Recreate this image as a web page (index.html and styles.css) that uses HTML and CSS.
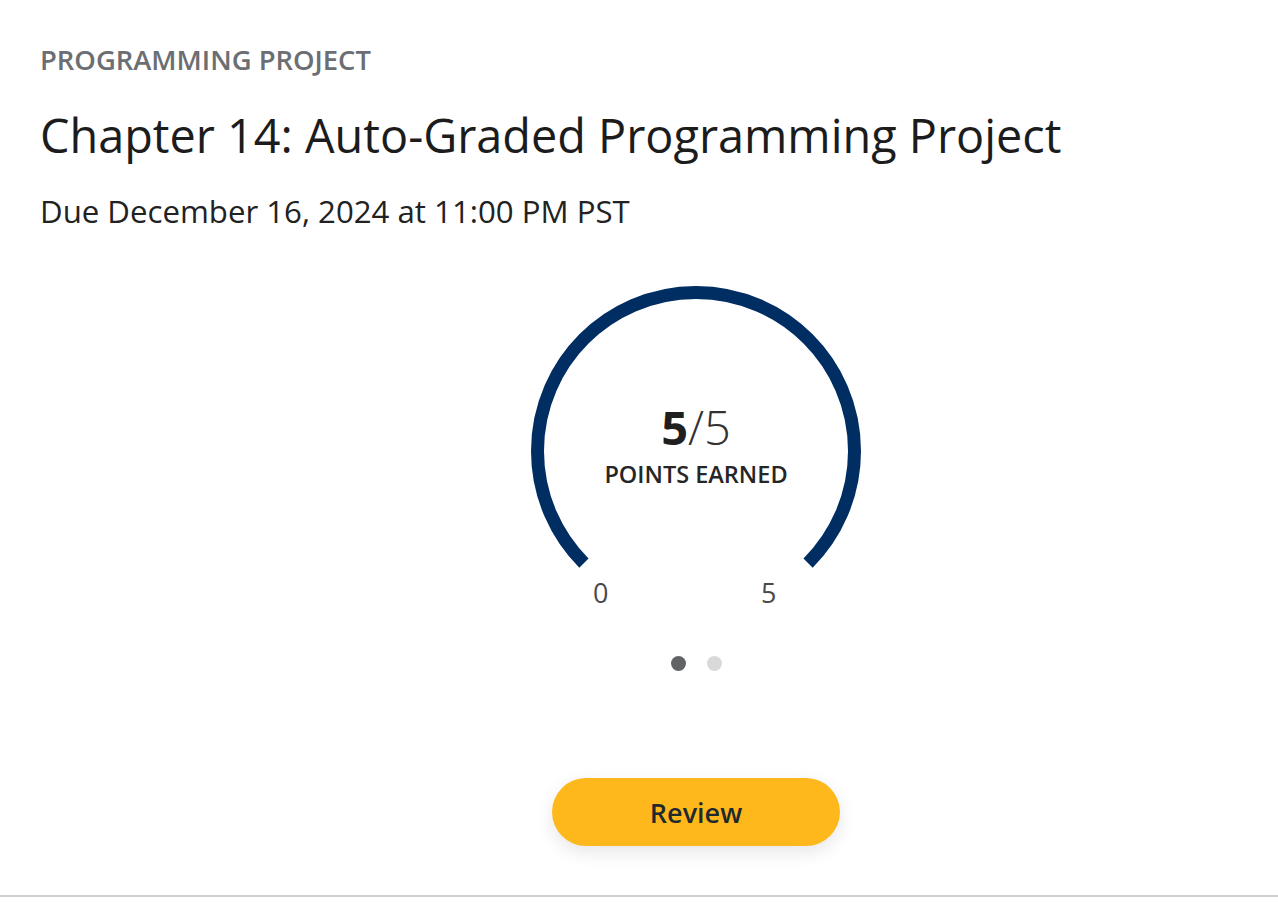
FILE: index.html
```html
<!DOCTYPE html>
<html lang="en">
<head>
<meta charset="utf-8">
<title>Chapter 14: Auto-Graded Programming Project</title>
<link rel="stylesheet" href="styles.css">
</head>
<body>
<div class="page">
  <section class="card">
    <header class="head">
      <div class="eyebrow">PROGRAMMING PROJECT</div>
      <h1 class="title">Chapter 14: Auto-Graded Programming Project</h1>
      <div class="due">Due December 16, 2024 at 11:00 PM PST</div>
    </header>
    <div class="score">
      <div class="gauge">
        <svg class="gauge-svg" width="340" height="340" viewBox="0 0 340 340">
          <path d="M 57.92 282.08 A 158.5 158.5 0 1 1 282.08 282.08" fill="none" stroke="#002d62" stroke-width="13"/>
        </svg>
        <div class="gauge-center">
          <div class="fraction"><b>5</b>/5</div>
          <div class="earned">POINTS EARNED</div>
        </div>
        <span class="tick tick-min">0</span>
        <span class="tick tick-max">5</span>
      </div>
      <div class="dots">
        <span class="dot dot-active"></span>
        <span class="dot"></span>
      </div>
      <button class="review">Review</button>
    </div>
  </section>
</div>
</body>
</html>
```

FILE: styles.css
```css
html, body {
  margin: 0;
  padding: 0;
  background: #ffffff;
}
body {
  font-family: "Open Sans", "Noto Sans", sans-serif;
  color: #1f1f1f;
}
.page {
  width: 1278px;
  height: 914px;
  overflow: hidden;
}
.card {
  width: 1312px;
  padding: 0 40px;
  border-bottom: 2px solid #cfcfcf;
  box-sizing: content-box;
}
.head {
  display: flex;
  flex-direction: column;
  padding-top: 42px;
}
.eyebrow {
  font-size: 27.4px;
  font-weight: 600;
  line-height: 36px;
  color: #6b6e72;
}
.title {
  margin: 27px 0 0;
  font-size: 46.8px;
  font-weight: 400;
  line-height: 60px;
  color: #1c1c1c;
}
.due {
  margin-top: 26px;
  font-size: 31.2px;
  line-height: 40px;
  color: #222;
}
.score {
  display: flex;
  flex-direction: column;
  align-items: center;
  padding-top: 50px;
  padding-bottom: 49px;
}
.gauge {
  position: relative;
  width: 340px;
  height: 340px;
}
.gauge-svg {
  display: block;
}
.gauge-center {
  position: absolute;
  left: 0;
  right: 0;
  top: 118px;
  text-align: center;
}
.fraction {
  font-size: 47px;
  font-weight: 300;
  line-height: 56px;
  color: #333;
}
.fraction b {
  font-weight: 700;
  color: #1f1f1f;
}
.earned {
  margin-top: 4px;
  font-size: 23.5px;
  font-weight: 600;
  line-height: 30px;
  color: #262626;
}
.tick {
  position: absolute;
  top: 294px;
  font-size: 27px;
  line-height: 36px;
  color: #4a4a4a;
}
.tick-min { left: 67px; }
.tick-max { left: 235px; }
.dots {
  display: flex;
  gap: 21px;
  margin-top: 35px;
}
.dot {
  width: 15px;
  height: 15px;
  border-radius: 50%;
  background: #d9d9d9;
}
.dot-active {
  background: #616365;
}
.review {
  margin-top: 107px;
  width: 288px;
  height: 68px;
  border: none;
  border-radius: 34px;
  background: #ffb81c;
  font-family: "Open Sans", "Noto Sans", sans-serif;
  font-size: 27px;
  font-weight: 600;
  color: #1f2a2e;
  box-shadow: 0 6px 18px rgba(0, 0, 0, 0.10);
}
```
